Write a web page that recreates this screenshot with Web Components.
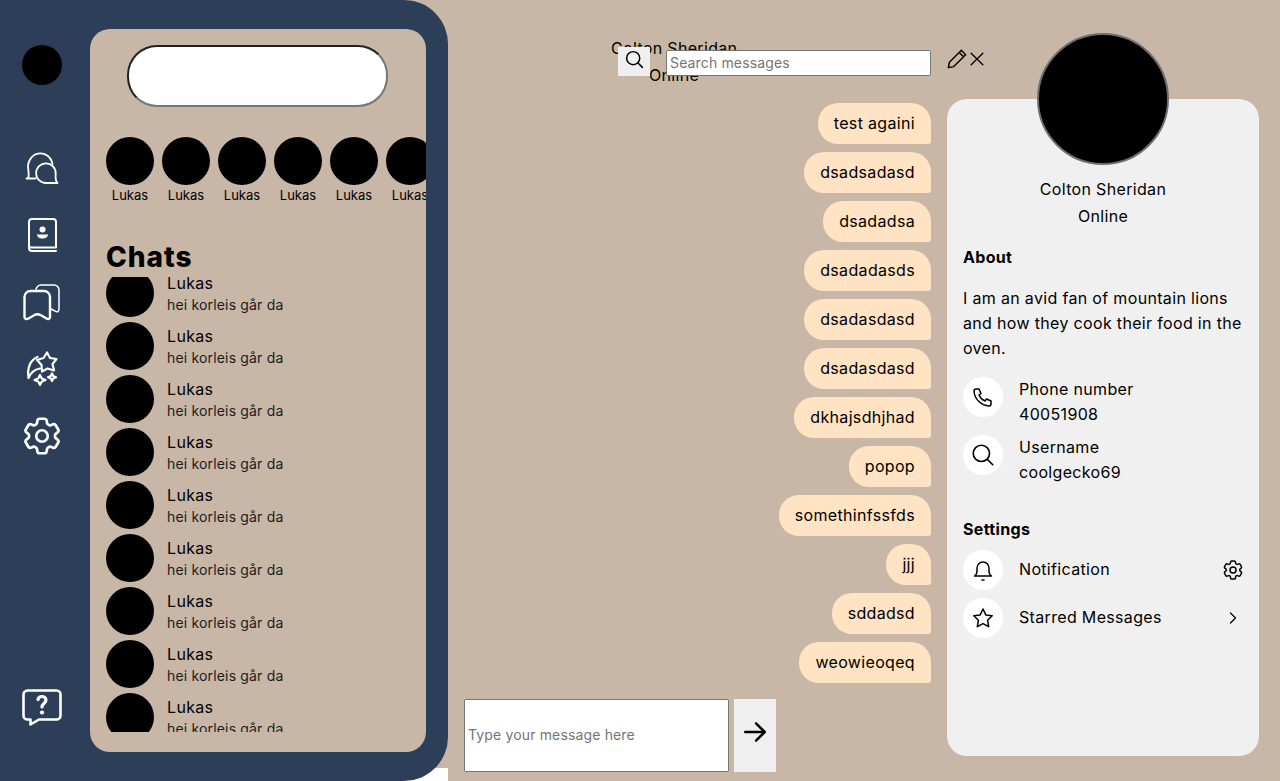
<!DOCTYPE html>
<html>
<head>
<meta charset="utf-8">
<title>Chat</title>
<style>
	html, body { margin: 0; height: 781px; overflow: hidden; background: #c8b6a6; }
	body { font-family: Inter, "Noto Sans", sans-serif; color: #000; letter-spacing: .33px; }
</style>
</head>
<body>
<chat-app></chat-app>

<script>
const ICONS = {
	chats: `<path d="M4.500 30.500h9M6 30.500c1.200-2.500.6-5.500.3-9A12 13 0 1 1 30.500 16"/><path d="M24 35h11.500c-1.800-1.500-2.200-4.500-1.800-9.500A9.800 9.800 0 1 0 24 35z"/>`,
	book: `<path d="M7 33V7a3 3 0 0 1 3-3h21a3 3 0 0 1 3 3v25.500H10a3 3 0 0 0-3 .5zM7 33c0 2 1 3 3 3h24"/><circle cx="20.500" cy="14.500" r="3" fill="currentColor" stroke="none"/><path d="M15 19.500h11c0 2.500-2.500 4-5.500 4s-5.500-1.500-5.500-4z" fill="currentColor" stroke="none"/>`,
	marks: `<path d="M2.500 15a6 6 0 0 1 6-6h13.500a6 6 0 0 1 6 6v20c0 2-2 2.500-3.500 1.500l-6-3.500q-3-1.500-6 0l-6 3.500c-2 1-4 .5-4-1.500z"/><path d="M14 9V8.500a5 5 0 0 1 5-5.500h13a5 5 0 0 1 5 5v19c0 3-2 3.500-4 2l-4-2" stroke-width="1.500"/>`,
	magic: `<path d="M25 3.500l3 5.500 6.500 1-4 5 1.500 6.500-6.500-2-5.500 3-.5-6.500-4.500-5 6.500-2z"/><path d="M15.500 8C9 11 5 18 6.500 29c2-5 6-8.500 11.500-9.500"/><path d="M18 26l1.800 3.500 3.700 1.500-3.700 1.500L18 36l-1.800-3.500-3.700-1.500 3.700-1.500zM30 24.500l1.200 2.500 2.800 1.200-2.800 1.200-1.200 2.600-1.200-2.600-2.800-1.200 2.800-1.200z"/>`,
	gear: `<path d="M9.594 3.940c.09-.542.56-.94 1.110-.94h2.593c.55 0 1.020.398 1.110.94l.213 1.281c.063.374.313.686.645.87.074.04.147.083.22.127.325.196.72.257 1.075.124l1.217-.456a1.125 1.125 0 0 1 1.370.49l1.296 2.247a1.125 1.125 0 0 1-.26 1.431l-1.003.827c-.293.241-.438.613-.43.992a7.723 7.723 0 0 1 0 .255c-.008.378.137.75.43.991l1.004.827c.424.35.534.955.26 1.430l-1.298 2.247a1.125 1.125 0 0 1-1.369.491l-1.217-.456c-.355-.133-.75-.072-1.076.124a6.470 6.470 0 0 1-.22.128c-.331.183-.581.495-.644.869l-.213 1.281c-.09.543-.56.94-1.110.94h-2.594c-.55 0-1.019-.398-1.110-.94l-.213-1.281c-.062-.374-.312-.686-.644-.87a6.520 6.520 0 0 1-.22-.127c-.325-.196-.72-.257-1.076-.124l-1.217.456a1.125 1.125 0 0 1-1.369-.49l-1.297-2.247a1.125 1.125 0 0 1 .26-1.431l1.004-.827c.292-.24.437-.613.43-.991a6.932 6.932 0 0 1 0-.255c.007-.38-.138-.751-.43-.992l-1.004-.827a1.125 1.125 0 0 1-.26-1.430l1.297-2.247a1.125 1.125 0 0 1 1.370-.491l1.216.456c.356.133.751.072 1.076-.124.072-.044.146-.086.22-.128.332-.183.582-.495.644-.869l.214-1.280Z"/><path d="M15 12a3 3 0 1 1-6 0 3 3 0 0 1 6 0Z"/>`,
	help: `<path d="M5.500 2.500h29a4 4 0 0 1 4 4v21a4 4 0 0 1-4 4H17l-8.500 5v-5h-3a4 4 0 0 1-4-4v-21a4 4 0 0 1 4-4z"/><path d="M16 11.500c.5-2 2-3 4-3s4 1.300 4 3.500c0 3.500-4 3.500-4 7" stroke-width="3.200"/><circle cx="20" cy="24.500" r="2.100" fill="currentColor" stroke="none"/>`,
	search: `<circle cx="10.500" cy="10.500" r="7.500"/><path d="M16 16l5 5"/>`,
	phone: `<path d="M5 4h3l2 4.500-2 1.500a11 11 0 0 0 6 6l1.500-2 4.500 2v3a2 2 0 0 1-2 2A16 16 0 0 1 3 6a2 2 0 0 1 2-2z"/>`,
	bell: `<path d="M3.500 18h17c-1.500-1-2.500-2.500-2.500-5V10a6 6 0 0 0-12 0v3c0 2.500-1 4-2.500 5z"/><path d="M11 22h2"/>`,
	star: `<path d="M12 3l2.800 5.900 6.400.9-4.600 4.500 1.100 6.400L12 17.700l-5.700 3 1.100-6.400-4.600-4.500 6.400-.9z"/>`,
	chevron: `<path d="M9 6l6 6-6 6"/>`,
	arrow: `<path d="M3 12h18M13 4l8 8-8 8"/>`,
	close: `<path d="M5 5l14 14M19 5L5 19"/>`,
	pencil: `<path d="M4 20l1-5L16 4l4 4L9 19zM14 6l4 4"/>`
};

window.customElements.define('ui-icon', class extends HTMLElement {

	constructor(){
		super();
		this.attachShadow({mode: 'open'});
	}

	connectedCallback() {
		let {name, box = 24, size = 24, weight = 2} = this.dataset;

		this.shadowRoot.innerHTML = `
			<style>
				:host { display: block; width: ${size}px; height: ${size}px; line-height: 0; }
				svg { width: 100%; height: 100%; fill: none; stroke: currentColor; stroke-width: ${weight}; stroke-linecap: round; stroke-linejoin: round; }
			</style>
			<svg viewBox="0 0 ${box} ${box}">${ICONS[name]}</svg>
		`;
	}
});

window.customElements.define('nav-rail', class extends HTMLElement {

	constructor(){
		super();
		let shadowRoot = this.attachShadow({mode: 'open'});

		shadowRoot.innerHTML = `
			<style>
				:host { display: flex; flex-direction: column; align-items: center; width: 84px; flex: none; margin-right: 6px; padding: 45px 0 53px; box-sizing: border-box; color: #fff; }
				.me { width: 40px; height: 40px; border-radius: 50%; background: #000; margin-bottom: 63px; }
				nav { display: flex; flex-direction: column; gap: 27px; }
				.help { margin-top: auto; }
			</style>
			<div class="me"></div>
			<nav>
				<ui-icon data-name="chats" data-box="40" data-size="40" data-weight="1.800"></ui-icon>
				<ui-icon data-name="book" data-box="40" data-size="40" data-weight="2"></ui-icon>
				<ui-icon data-name="marks" data-box="40" data-size="40" data-weight="2.400"></ui-icon>
				<ui-icon data-name="magic" data-box="40" data-size="40" data-weight="2.200"></ui-icon>
				<ui-icon data-name="gear" data-size="46" data-weight="1.400" style="margin:-3px"></ui-icon>
			</nav>
			<ui-icon class="help" data-name="help" data-box="40" data-size="40" data-weight="2.600"></ui-icon>
		`;
	}
});

window.customElements.define('story-item', class extends HTMLElement {

	constructor(){
		super();
		let shadowRoot = this.attachShadow({mode: 'open'});

		shadowRoot.innerHTML = `
			<style>
				:host { display: block; flex: none; width: 48px; text-align: center; font-size: 13px; line-height: 20px; letter-spacing: 0; }
				div { width: 48px; height: 48px; border-radius: 50%; background: #000; }
				span { display: block; white-space: nowrap; }
			</style>
			<div></div>
			<span><slot></slot></span>
		`;
	}
});

window.customElements.define('chat-item', class extends HTMLElement {

	constructor(){
		super();
		let shadowRoot = this.attachShadow({mode: 'open'});

		shadowRoot.innerHTML = `
			<style>
				:host { display: flex; align-items: center; gap: 13px; height: 48px; flex: none; }
				.pic { width: 48px; height: 48px; border-radius: 50%; background: #000; flex: none; }
				.name { font-size: 16px; line-height: 24px; margin-top: -1px; }
				.last { font-size: 14px; line-height: 21px; margin-top: -1px; color: #1c1c1c; letter-spacing: .17px; }
			</style>
			<div class="pic"></div>
			<div>
				<div class="name"><slot name="name"></slot></div>
				<div class="last"><slot name="last"></slot></div>
			</div>
		`;
	}
});

window.customElements.define('chat-panel', class extends HTMLElement {

	constructor(){
		super();
		let shadowRoot = this.attachShadow({mode: 'open'});

		let stories = '<story-item>Lukas</story-item>'.repeat(6);
		let chats = '<chat-item><span slot="name">Lukas</span><span slot="last">hei korleis går da</span></chat-item>'.repeat(9);

		shadowRoot.innerHTML = `
			<style>
				:host { display: block; width: 336px; height: 723px; margin-top: 29px; flex: none; border-radius: 20px; background: #c8b6a6; overflow: hidden; box-sizing: border-box; padding: 16px 0 20px 16px; }
				input { display: block; width: 261px; height: 62px; margin: 0 0 30px 21px; box-sizing: border-box; border-radius: 30px; }
				.stories { display: flex; gap: 8px; height: 68px; overflow: hidden; }
				h2 { margin: 34px 0 2px; font-size: 28px; line-height: 36px; height: 36px; font-weight: 800; letter-spacing: 1px; }
				.list { display: flex; flex-direction: column; gap: 5px; height: 455px; overflow: hidden; }
				.list > :first-child { margin-top: -8px; }
			</style>
			<input type="text">
			<div class="stories">${stories}</div>
			<h2>Chats</h2>
			<div class="list">${chats}</div>
		`;
	}
});

window.customElements.define('side-bar', class extends HTMLElement {

	constructor(){
		super();
		let shadowRoot = this.attachShadow({mode: 'open'});

		shadowRoot.innerHTML = `
			<style>
				:host { display: block; width: 448px; height: 781px; flex: none; background: linear-gradient(#c8b6a6 768px, #fff 768px); }
				.bar { display: flex; height: 100%; background: #2d3f58; border-radius: 0 44px 44px 0; }
			</style>
			<div class="bar">
				<nav-rail></nav-rail>
				<chat-panel></chat-panel>
			</div>
		`;
	}
});

window.customElements.define('message-bubble', class extends HTMLElement {

	constructor(){
		super();
		let shadowRoot = this.attachShadow({mode: 'open'});

		shadowRoot.innerHTML = `
			<style>
				:host { display: block; align-self: flex-end; padding: 8px 16px; height: 41px; box-sizing: border-box; line-height: 25px; font-size: 16px; background: #ffe3c2; border-radius: 20px 20px 3px 20px; }
			</style>
			<slot></slot>
		`;
	}
});

window.customElements.define('chat-view', class extends HTMLElement {

	constructor(){
		super();
		let shadowRoot = this.attachShadow({mode: 'open'});

		let messages = ['test againi', 'dsadsadasd', 'dsadadsa', 'dsadadasds', 'dsadasdasd', 'dsadasdasd', 'dkhajsdhjhad', 'popop', 'somethinfssfds', 'jjj', 'sddadsd', 'weowieoqeq'];

		shadowRoot.innerHTML = `
			<style>
				:host { display: block; position: relative; width: 499px; flex: none; box-sizing: border-box; padding: 36px 16px 0; font-size: 16px; line-height: 25px; }
				.title { width: 126px; margin-left: 147px; height: 67px; text-align: center; white-space: nowrap; }
				.title div + div { margin-top: 2px; }
				.messages { display: flex; flex-direction: column; gap: 8px; }
				.compose { display: flex; gap: 5px; margin-top: 16px; height: 73px; }
				.compose input { width: 265px; box-sizing: border-box; padding: 1px 2px 4px; font: 14px Inter, "Noto Sans", sans-serif; letter-spacing: .15px; }
				.send { width: 42px; background: #efefef; display: flex; align-items: center; justify-content: center; padding-bottom: 7px; box-sizing: border-box; }
				.tools { position: absolute; top: 47px; left: 170px; display: flex; }
				.find { width: 32px; height: 29px; background: #efefef; display: flex; justify-content: center; padding-top: 2px; box-sizing: border-box; }
				.tools input { width: 265px; height: 26px; margin: 3px 0 0 16px; box-sizing: border-box; padding: 0 2px 2px; font: 14px Inter, "Noto Sans", sans-serif; letter-spacing: .15px; }
				.pencil { position: absolute; left: 326px; top: -1px; }
				.close { position: absolute; left: 349px; top: 2px; }
			</style>
			<div class="title"><div>Colton Sheridan</div><div>Online</div></div>
			<div class="messages">${messages.map(m => `<message-bubble>${m}</message-bubble>`).join('')}</div>
			<div class="compose">
				<input type="text" placeholder="Type your message here">
				<div class="send"><ui-icon data-name="arrow" data-size="26" data-weight="2.300"></ui-icon></div>
			</div>
			<div class="tools">
				<div class="find"><ui-icon data-name="search" data-size="21" data-weight="1.700"></ui-icon></div>
				<input type="text" placeholder="Search messages">
				<ui-icon class="pencil" data-name="pencil" data-size="26" data-weight="1.300"></ui-icon>
				<ui-icon class="close" data-name="close" data-size="20" data-weight="1.600"></ui-icon>
			</div>
		`;
	}
});

window.customElements.define('info-row', class extends HTMLElement {

	constructor(){
		super();
		let shadowRoot = this.attachShadow({mode: 'open'});

		let {icon, size = 24, trail = ''} = this.dataset;

		shadowRoot.innerHTML = `
			<style>
				:host { display: flex; gap: 16px; align-items: flex-start; }
				:host([data-trail]) { align-items: center; }
				:host([data-trail]) .text { margin-bottom: 2px; }
				.dot { width: 40px; height: 40px; border-radius: 50%; background: #fff; display: flex; align-items: center; justify-content: center; flex: none; }
				.text { flex: 1; }
				.end { flex: none; margin-right: ${trail == 'gear' ? -2 : 0}px; }
			</style>
			<div class="dot"><ui-icon data-name="${icon}" data-size="${size}" data-weight="1.500"></ui-icon></div>
			<div class="text"><slot></slot></div>
			${trail ? `<ui-icon class="end" data-name="${trail}" data-size="${trail == 'gear' ? 24 : 20}" data-weight="1.500"></ui-icon>` : ''}
		`;
	}
});

window.customElements.define('profile-card', class extends HTMLElement {

	constructor(){
		super();
		let shadowRoot = this.attachShadow({mode: 'open'});

		shadowRoot.innerHTML = `
			<style>
				:host { display: block; position: relative; width: 312px; height: 657px; margin-top: 99px; flex: none; box-sizing: border-box; padding: 78px 16px 0; background: #f0f0f0; border-radius: 20px; font-size: 16px; line-height: 25px; }
				.pic { position: absolute; left: 90px; top: -66px; width: 132px; height: 132px; box-sizing: border-box; border-radius: 50%; background: #000; border: 2px solid #6e6e6e; }
				.who { text-align: center; }
				.who div + div { margin-top: 2px; }
				h3 { margin: 16px 0 0; font: inherit; font-weight: 700; }
				p { margin: 16px 0; }
				.rows { display: flex; flex-direction: column; gap: 8px; }
				.settings { margin-top: 8px; }
				h3.second { margin-top: 32px; }
			</style>
			<div class="pic"></div>
			<div class="who"><div>Colton Sheridan</div><div>Online</div></div>
			<h3>About</h3>
			<p>I am an avid fan of mountain lions and how they cook their food in the oven.</p>
			<div class="rows">
				<info-row data-icon="phone">Phone number<br>40051908</info-row>
				<info-row data-icon="search" data-size="26">Username<br>coolgecko69</info-row>
			</div>
			<h3 class="second">Settings</h3>
			<div class="rows settings">
				<info-row data-icon="bell" data-trail="gear">Notification</info-row>
				<info-row data-icon="star" data-trail="chevron">Starred Messages</info-row>
			</div>
		`;
	}
});

window.customElements.define('chat-app', class extends HTMLElement {

	constructor(){
		super();
		let shadowRoot = this.attachShadow({mode: 'open'});

		shadowRoot.innerHTML = `
			<style>
				:host { display: flex; width: 1280px; height: 781px; overflow: hidden; }
			</style>
			<side-bar></side-bar>
			<chat-view></chat-view>
			<profile-card></profile-card>
		`;
	}
});
</script>
</body>
</html>
